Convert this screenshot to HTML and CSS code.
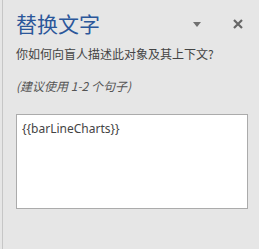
FILE: index.html
```html
<!DOCTYPE html>
<html>
<head lang="zh">
    <meta charset="UTF-8">
    <title>替换文字</title>
    <link rel="stylesheet" href="styles.css">
</head>
<body>
    <div class="pane">
        <div class="head">
            <h1 class="title">替换文字</h1>
            <span class="drop"></span>
            <span class="close">
                <svg width="10" height="10" viewBox="0 0 10 10">
                    <path d="M1 1 L9 9 M9 1 L1 9" stroke="#666" stroke-width="2.2" fill="none"/>
                </svg>
            </span>
        </div>
        <p class="ask">你如何向盲人描述此对象及其上下文?</p>
        <p class="hint">(建议使用 1-2 个句子)</p>
        <div class="box">{{barLineCharts}}</div>
    </div>
</body>
</html>
```
FILE: styles.css
```css
/*reset*/
body,
h1,
p {
    margin: 0;
    padding: 0
}

body {
    background: #e6e6e6;
    font: 12px/16px "Noto Sans CJK SC", "Noto Sans", sans-serif;
    color: #444;
}

.pane {
    margin-left: 2px;
    border-left: 1px solid #c6c6c6;
    height: 249px;
    padding-left: 13px;
    padding-right: 11px;
    box-sizing: border-box;
}

.head {
    display: flex;
    align-items: center;
    padding-top: 9px;
    height: 28px;
}

.title {
    font-size: 21px;
    line-height: 28px;
    font-weight: normal;
    color: #2b579a;
    flex: 1;
}

.drop {
    width: 0;
    height: 0;
    border-left: 4.5px solid transparent;
    border-right: 4.5px solid transparent;
    border-top: 5px solid #707070;
    margin-top: 2px;
    margin-right: 32px;
}

.close {
    display: flex;
    margin-right: 5px;
    margin-top: 1px;
}

.ask {
    margin-top: 9px;
}

.hint {
    margin-top: 16px;
    font-style: italic;
    color: #555;
}

.box {
    margin-top: 20px;
    background: #fff;
    border: 1px solid #ababab;
    padding: 6px 5px;
    box-sizing: border-box;
    height: 95px;
    font-family: "Noto Sans", sans-serif;
    font-size: 12px;
    line-height: 16px;
}
```
